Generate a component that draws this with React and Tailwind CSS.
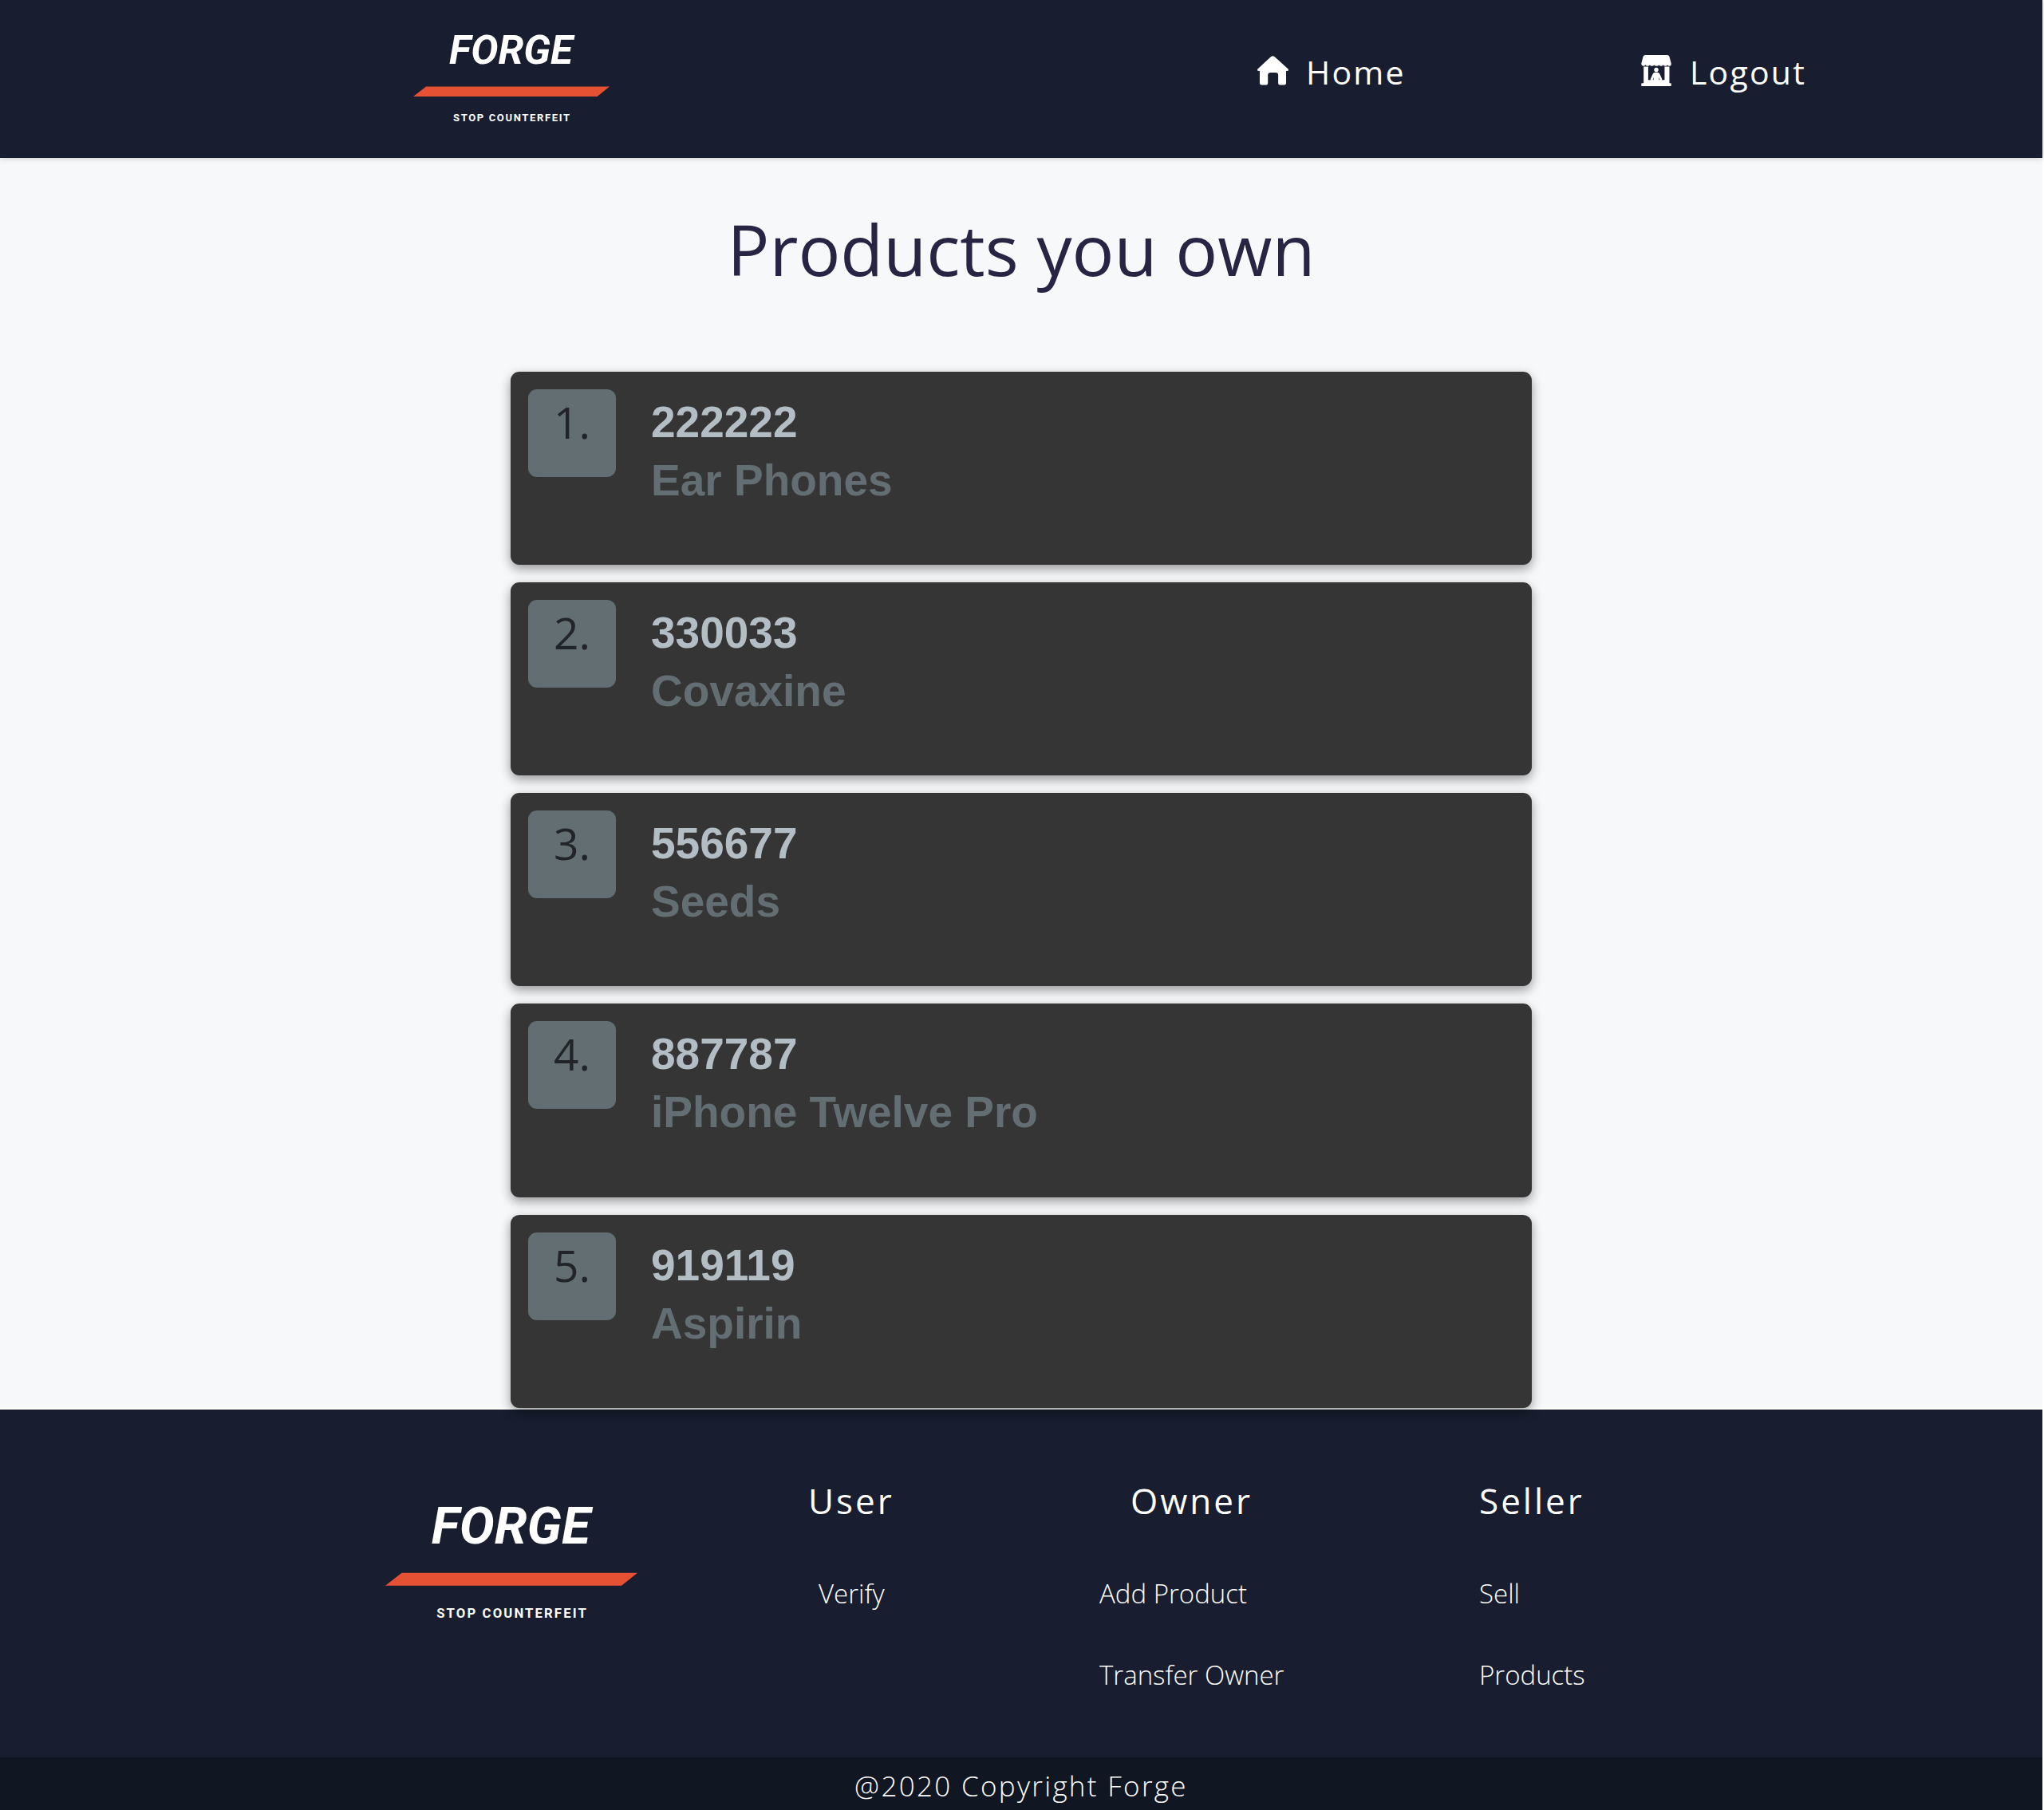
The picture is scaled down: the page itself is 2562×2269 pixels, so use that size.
import React from "react";

const products = [
  { id: "222222", name: "Ear Phones" },
  { id: "330033", name: "Covaxine" },
  { id: "556677", name: "Seeds" },
  { id: "887787", name: "iPhone Twelve Pro" },
  { id: "919119", name: "Aspirin" },
];

function Logo({ className }) {
  return (
    <svg viewBox="0 -20 246 150" className={className} fontFamily="Roboto, sans-serif" fill="#fff">
      <text x="45" y="36" fontSize="50" fontWeight="700" fontStyle="italic" textLength="155" lengthAdjust="spacingAndGlyphs">FORGE</text>
      <path d="M16 64.500H246L230.500 77H0Z" fill="#e65033" />
      <text x="50" y="108.300" fontSize="13" fontWeight="700" textLength="146">STOP COUNTERFEIT</text>
    </svg>
  );
}

function HomeIcon() {
  return (
    <svg viewBox="78 57 118 111" className="mb-[5px] h-[37px] w-[39px]" fill="#fff">
      <path d="M129 60q7-6 15 0l50 46q3 3 1 7l-8 1v46q0 7-7 7h-16q-7 0-7-7v-30q0-10-10-10h-19q-10 0-10 10v30q0 7-7 7H94q-7 0-7-7v-46l-8-1q-2-4 1-7Z" />
    </svg>
  );
}

function StallIcon() {
  return (
    <svg viewBox="53 55 112 116" className="mb-[5px] h-[39px] w-[38px]" fill="#fff">
      <path d="M68 55h82q6 0 8 6l7 27q0 8-6 8-5 0-8-4-3 4-8 4t-8-4q-3 4-8 4t-8-4q-3 4-9 4t-9-4q-3 4-8 4t-8-4q-3 4-8 4t-8-4q-3 4-8 4-7 0-8-8l7-27q2-6 8-6Z" />
      <path d="M62 98h17v50h10l-2-2 9-20q3-6 8-6h10q5 0 8 6l9 20-2 2h11V98h18v62h5q2 0 2 3v5q0 3-3 3H56q-3 0-3-3v-5q0-3 3-3h6Z" />
      <circle cx="109" cy="110" r="8" />
      <path d="M96 148l3-11v11ZM122 148l-3-11v11Z" fill="#181e2f" />
    </svg>
  );
}

function FooterLink({ className, children }) {
  return <p className={"text-[33px] leading-[50px] font-light " + className}>{children}</p>;
}

export default function App() {
  return (
    <div className="flex h-[2269px] w-[2560px] flex-col bg-white font-['Open_Sans',sans-serif] text-[#212529]">
      <header className="relative z-10 flex h-[198px] shrink-0 bg-[#181e2f] text-white shadow-[0_0_8px_rgba(0,0,0,0.2)]">
        <Logo className="mt-[24px] ml-[518px] h-[150px] w-[246px]" />
        <nav className="flex h-[88px] items-center pt-[91px] text-[41px] tracking-[2.2px]">
          <a className="ml-[812px] flex w-[481px] items-center gap-[22px]"><HomeIcon />Home</a>
          <a className="flex items-center gap-[23px]"><StallIcon />Logout</a>
        </nav>
      </header>
      <main className="flex h-[1567px] shrink-0 flex-col items-center bg-[#f7f8fa]">
        <h1 className="mt-[48px] h-[220px] shrink-0 text-[88px] leading-[132px] text-[#282443]">Products you own</h1>
        <ol className="flex flex-col gap-[22px]">
          {products.map((p, i) => (
            <li key={p.id} className="relative z-10 flex h-[242.140px] w-[1280px] shrink-0 gap-[44px] rounded-[11px] bg-[#353535] p-[22px] shadow-[0_5px_14px_rgba(0,0,0,0.4)]">
              <div className="h-[110px] w-[110px] rounded-[11px] bg-[#636e72] text-center text-[55px] leading-[82px]">{i + 1}.</div>
              <div className="pt-[5px] font-['Liberation_Sans',sans-serif] text-[55px] leading-[73px] font-bold">
                <p className="text-[#b2bec3]">{p.id}</p>
                <p className="text-[#636e72]">{p.name}</p>
              </div>
            </li>
          ))}
        </ol>
      </main>
      <footer className="mt-[2px] h-[436px] shrink-0 bg-[#181e2f] text-white">
        <div className="flex">
          <Logo className="mt-[96px] ml-[483px] h-[193px] w-[316px]" />
          <div className="mt-[81px] ml-[214px] w-[365px]">
            <h2 className="text-[44px] leading-[66px] tracking-[3px]">User</h2>
            <FooterLink className="mt-[59px] ml-[13px]">Verify</FooterLink>
          </div>
          <div className="mt-[81px] w-[476px]">
            <h2 className="ml-[39px] text-[44px] leading-[66px] tracking-[3px]">Owner</h2>
            <FooterLink className="mt-[59px]">Add Product</FooterLink>
            <FooterLink className="mt-[52px]">Transfer Owner</FooterLink>
          </div>
          <div className="mt-[81px]">
            <h2 className="text-[44px] leading-[66px] tracking-[3px]">Seller</h2>
            <FooterLink className="mt-[59px]">Sell</FooterLink>
            <FooterLink className="mt-[52px]">Products</FooterLink>
          </div>
        </div>
      </footer>
      <div className="h-[66px] shrink-0 overflow-hidden bg-[#101622] text-center text-[35px] leading-[72px] font-light tracking-[2.3px] text-white">@2020 Copyright Forge</div>
    </div>
  );
}
